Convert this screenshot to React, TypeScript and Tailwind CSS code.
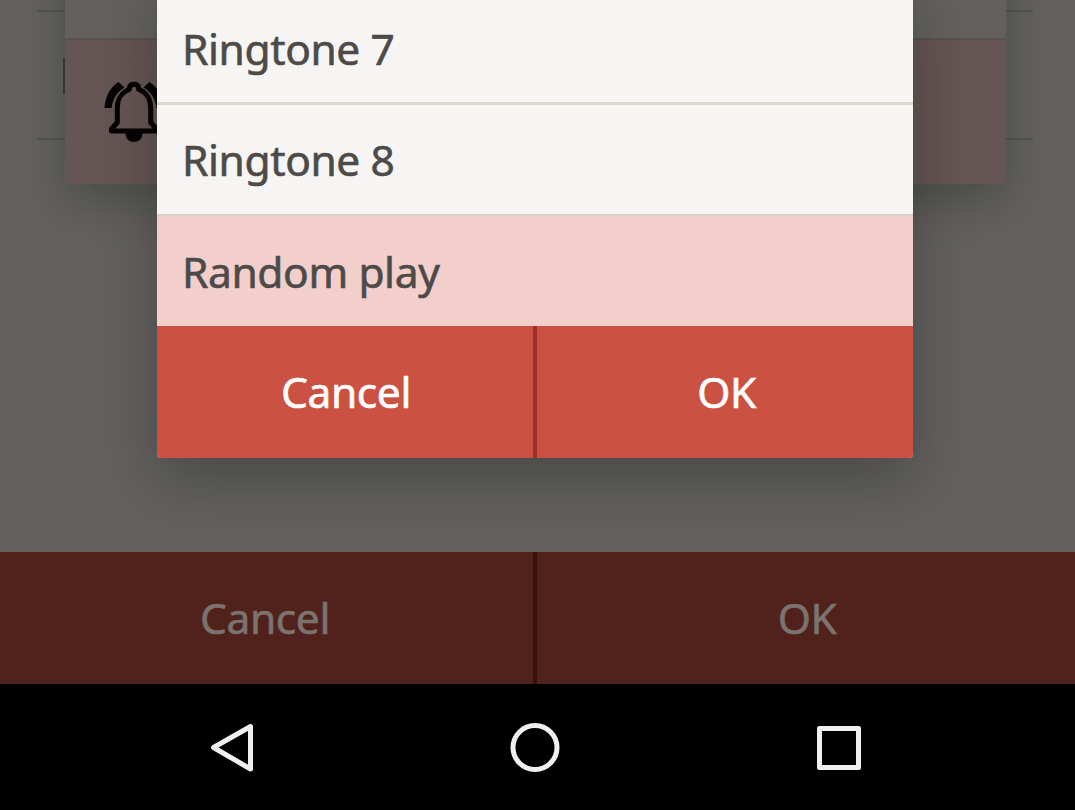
import React from "react";

function RingingBell() {
  return (
    <svg width="62" height="64" viewBox="103 80 62 64" fill="none" stroke="#050303" strokeWidth="5">
      <path d="M111.500 131V129L117.300 122.500V108C117.300 99 122 92 129.300 89.500V88Q129.800 84.300 134 84.300Q138.200 84.300 138.700 88V89.500C146 92 150.700 99 150.700 108V122.500L156.500 129V131Z" strokeLinejoin="round" />
      <path d="M125.500 133H142.500C142.500 139 138.500 142 134 142C129.500 142 125.500 139 125.500 133Z" fill="#050303" stroke="none" />
      <path d="M118.500 82L124.500 87.500C117 92 112.500 99 111.600 108H104.500C105.300 96 110 87.500 118.500 82Z" fill="#050303" stroke="none" />
      <path d="M149.500 82L143.500 87.500C151 92 155.500 99 156.400 108H163.500C162.700 96 158 87.500 149.500 82Z" fill="#050303" stroke="none" />
    </svg>
  );
}

function SettingsPage() {
  return (
    <main className="relative h-[552px] overflow-hidden bg-[#62615f]">
      <div className="ml-[37px] mr-[42px] mt-[10px] h-[130px] border-y-2 border-[#535350]" />
      <div className="absolute left-[63px] top-[58px] h-9 w-[2px] bg-[#3b3b39]" />
      <section className="absolute left-[65px] top-[-100px] flex h-[284px] w-[941px] flex-col bg-[#62615f] shadow-[0_17px_42px_rgba(0,0,0,0.22)]">
        <div className="h-[140px] border-b-2 border-[#555351]" />
        <div className="flex flex-1 items-start bg-[#655554] pl-[38px] pt-[40px]">
          <RingingBell />
        </div>
      </section>
    </main>
  );
}

function RingtoneDialog() {
  return (
    <div role="dialog" className="absolute left-[157px] top-[-20px] flex w-[756px] flex-col rounded-b-[4px] bg-[#f6f5f3] text-[#4d4a48] shadow-[0_22px_60px_rgba(0,0,0,0.25)]">
      <div className="flex h-[125px] items-center border-b-[3px] border-[#d8d8cd] pl-[25px] pt-[15px]">Ringtone 7</div>
      <div className="flex h-[111px] items-center border-b-2 border-[#d5d1c6] pl-[25px]">Ringtone 8</div>
      <div className="flex h-[110px] items-center bg-[#f3cfcc] pl-[25px] pt-[2px]">Random play</div>
      <div className="flex h-[132px] overflow-hidden rounded-b-[4px] bg-[#cb5242] text-white">
        <button className="w-[380px] border-r-4 border-[#9b3027] pl-[2px]">Cancel</button>
        <button className="flex-1 pl-[3px]">OK</button>
      </div>
    </div>
  );
}

export default function App() {
  return (
    <div className="relative flex h-[810px] w-[1075px] flex-col overflow-hidden bg-black font-['Noto_Sans',sans-serif] text-[42.5px] font-normal leading-[56px] tracking-[-0.4px] [-webkit-text-stroke:0.6px_currentColor]">
      <SettingsPage />
      <div className="flex h-[132px] bg-[#51211b] text-[#7b736f]">
        <button className="w-[537px] border-r-4 border-[#3a100c] pr-[3px]">Cancel</button>
        <button className="flex-1 pl-[2px]">OK</button>
      </div>
      <nav className="h-[126px] bg-black">
        <svg width="1075" height="126" fill="none" stroke="#f0f0f0" strokeWidth="5" strokeLinejoin="round">
          <path d="M213.500 63.500L250.500 42.500V85Z" />
          <circle cx="535" cy="63.500" r="22" />
          <rect x="819.500" y="44.500" width="39" height="39" />
        </svg>
      </nav>
      <RingtoneDialog />
    </div>
  );
}
